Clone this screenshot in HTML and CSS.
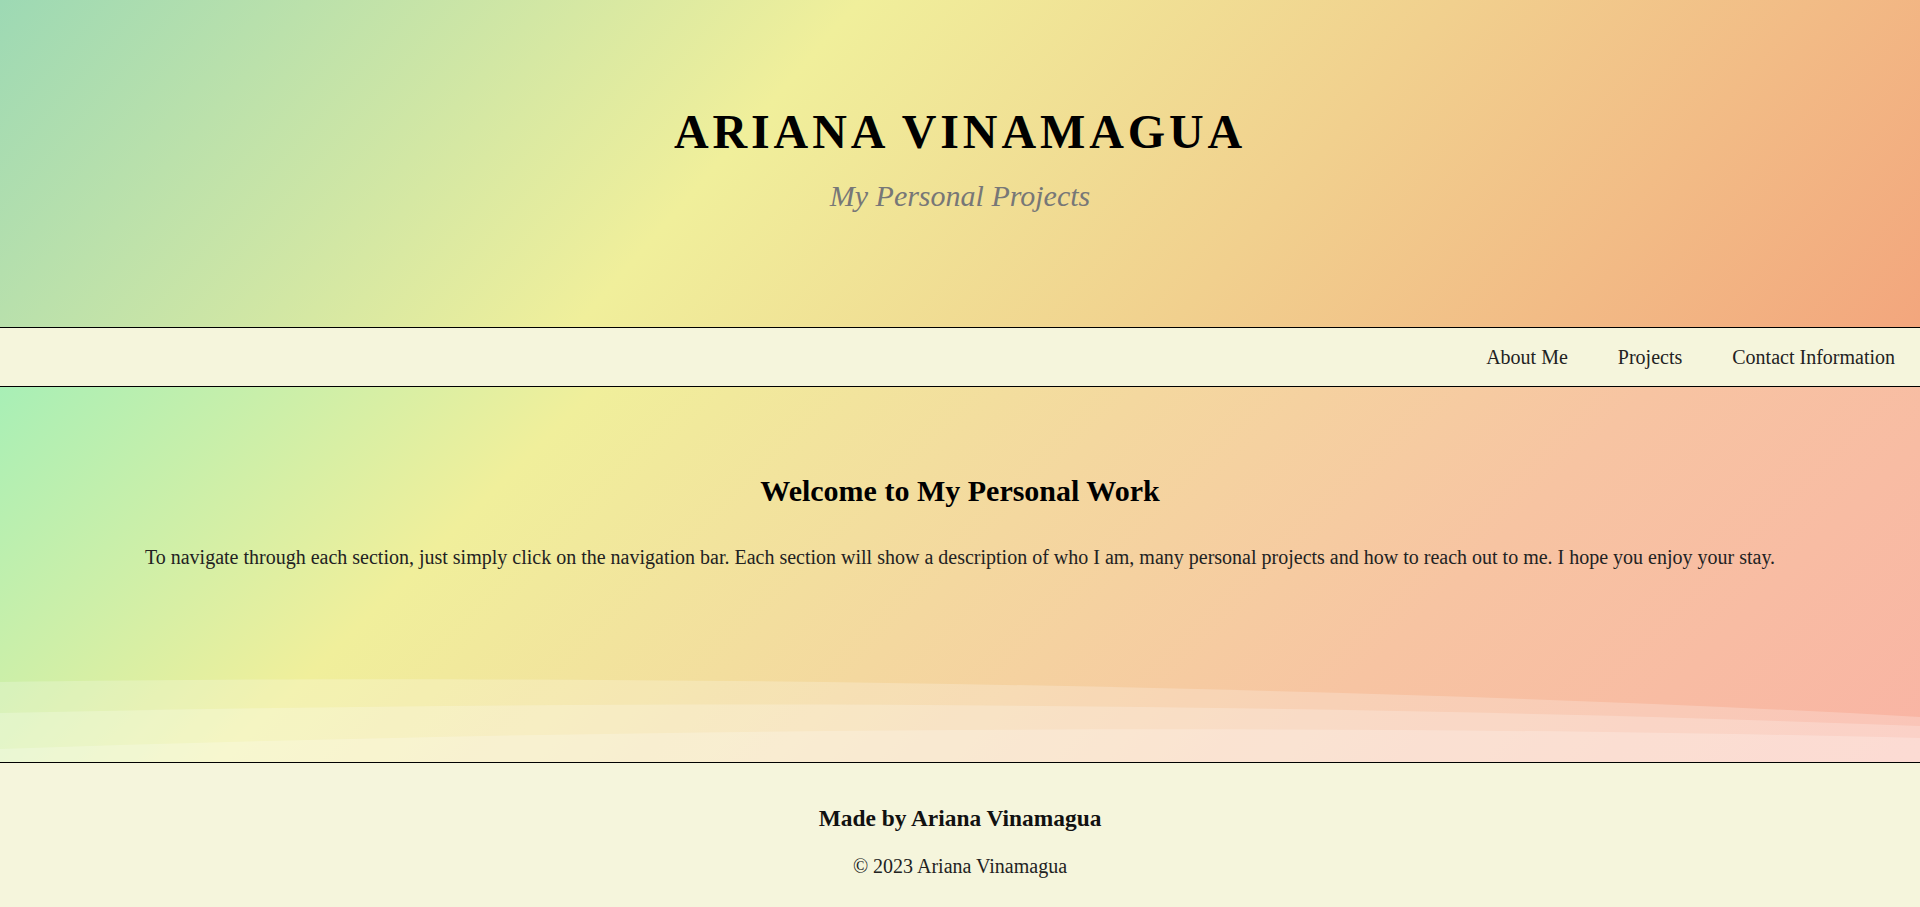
FILE: index.html
```html
<!DOCTYPE html>
<html lang="en">
<head>
<meta charset="utf-8">
<title>Ariana Vinamagua</title>
<link rel="stylesheet" href="styles.css">
</head>
<body>
<header class="hero">
  <h1 class="hero-title">ARIANA VINAMAGUA</h1>
  <p class="hero-subtitle">My Personal Projects</p>
</header>
<nav class="navbar">
  <a class="nav-link" href="#about">About Me</a>
  <a class="nav-link" href="#projects">Projects</a>
  <a class="nav-link" href="#contact">Contact Information</a>
</nav>
<main class="welcome">
  <div class="welcome-content">
    <h2 class="welcome-title">Welcome to My Personal Work</h2>
    <p class="welcome-text">To navigate through each section, just simply click on the navigation bar. Each section will show a description of who I am, many personal projects and how to reach out to me. I hope you enjoy your stay.</p>
  </div>
  <svg class="waves" viewBox="0 0 1920 85" preserveAspectRatio="none" aria-hidden="true">
    <path d="M0,5 C500,-3 1300,5 1920,40 L1920,85 L0,85 Z"/>
    <path d="M0,36 C600,22 1300,25 1920,49 L1920,85 L0,85 Z"/>
    <path d="M0,72 C700,48 1400,48 1920,61 L1920,85 L0,85 Z"/>
  </svg>
</main>
<footer class="footer">
  <h3 class="footer-title">Made by Ariana Vinamagua</h3>
  <p class="footer-copy">© 2023 Ariana Vinamagua</p>
</footer>
</body>
</html>
```
FILE: styles.css
```css
* { box-sizing: border-box; }

html, body {
  margin: 0;
  padding: 0;
}

body {
  font-family: "Liberation Serif", "Times New Roman", serif;
  color: #111;
  background: #f5f5dc;
}

.hero {
  height: 327px;
  padding-top: 104px;
  text-align: center;
  background: linear-gradient(131deg, #9dd9b4 0%, #f0ef9b 39%, #f1d08e 66%, #f3a67d 100%);
}

.hero-title {
  margin: 0 0 19px;
  font-size: 48px;
  line-height: 56px;
  font-weight: bold;
  letter-spacing: 3.9px;
  color: #000;
}

.hero-subtitle {
  margin: 0;
  font-size: 30px;
  line-height: 34px;
  font-style: italic;
  color: #777;
}

.navbar {
  display: flex;
  justify-content: flex-end;
  align-items: center;
  height: 60px;
  background: #f5f5dc;
  border-top: 1px solid #000;
  border-bottom: 1px solid #000;
}

.nav-link {
  padding: 0 25px;
  font-size: 20px;
  line-height: 24px;
  color: #222;
  text-decoration: none;
}

.welcome {
  display: flex;
  flex-direction: column;
  height: 375px;
  background: linear-gradient(135deg, #a8efb6 0%, #f0ef9b 26%, #f4d89f 50%, #f7c4a2 72%, #f9b4a4 100%);
}

.welcome-content {
  padding-top: 86px;
  text-align: center;
}

.welcome-title {
  margin: 0 0 36px;
  font-size: 30px;
  line-height: 36px;
  font-weight: bold;
  color: #000;
}

.welcome-text {
  margin: 0;
  font-size: 20px;
  line-height: 24px;
  color: #222;
}

.waves {
  display: block;
  width: 100%;
  height: 85px;
  margin-top: auto;
}

.waves path {
  fill: #fff;
  fill-opacity: 0.22;
}

.footer {
  height: 145px;
  padding-top: 41px;
  text-align: center;
  background: #f5f5dc;
  border-top: 1px solid #000;
}

.footer-title {
  margin: 0 0 22px;
  font-size: 23.4px;
  line-height: 28px;
  font-weight: bold;
  color: #111;
}

.footer-copy {
  margin: 0;
  font-size: 20px;
  line-height: 24px;
  color: #222;
}
```
